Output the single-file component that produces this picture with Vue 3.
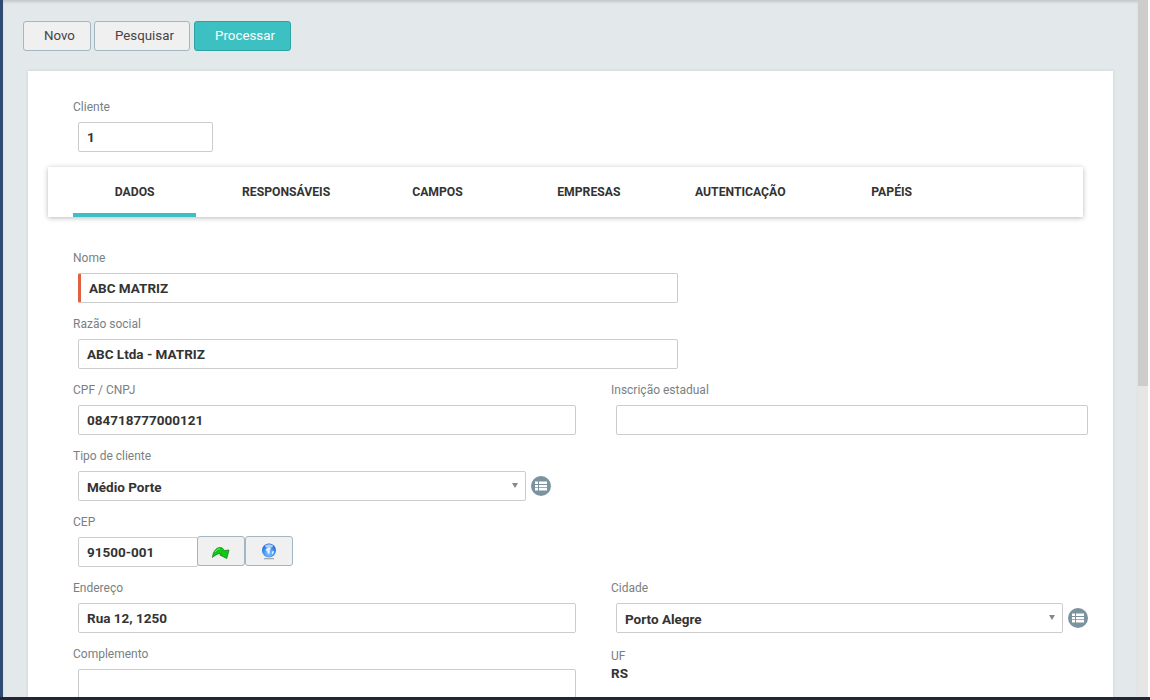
<script setup>
const tabs = ['DADOS', 'RESPONSÁVEIS', 'CAMPOS', 'EMPRESAS', 'AUTENTICAÇÃO', 'PAPÉIS']
</script>

<template>
  <div class="page">
    <div class="main">
      <!-- toolbar -->
      <div class="toolbar">
        <button class="btn btn-novo">Novo</button>
        <button class="btn btn-pesquisar">Pesquisar</button>
        <button class="btn btn-primary">Processar</button>
      </div>

      <div class="card">
        <div class="field-cliente">
          <label>Cliente</label>
          <div class="input input-cliente">1</div>
        </div>

        <!-- tabs -->
        <div class="tabs">
          <div v-for="(t, i) in tabs" :key="t" class="tab" :class="{ active: i === 0 }">{{ t }}</div>
        </div>

        <div class="form">
          <div class="row">
            <label>Nome</label>
            <div class="input input-nome required">ABC MATRIZ</div>
          </div>
          <div class="row">
            <label>Razão social</label>
            <div class="input input-nome">ABC Ltda - MATRIZ</div>
          </div>
          <div class="row two">
            <div>
              <label>CPF / CNPJ</label>
              <div class="input">084718777000121</div>
            </div>
            <div>
              <label>Inscrição estadual</label>
              <div class="input"></div>
            </div>
          </div>
          <div class="row">
            <label>Tipo de cliente</label>
            <div class="with-icon tipo">
              <div class="input select">Médio Porte<span class="caret"></span></div>
              <svg class="list-icon" viewBox="0 0 20 20">
                <circle cx="10" cy="10" r="10" fill="#7b929f" />
                <path fill="#fff" d="M4 5.5h3v2.6H4zM8 5.5h8v2.6H8zM4 8.9h3v2.4H4zM8 8.9h8v2.4H8zM4 12.1h3v2.5H4zM8 12.1h8v2.5H8z" />
              </svg>
            </div>
          </div>
          <div class="row">
            <label>CEP</label>
            <div class="cep">
              <div class="input input-cep">91500-001</div>
              <button class="btn-icon btn-arrow">
                <svg width="18" height="12" viewBox="0 0 18 12">
                  <path fill="#12c912" stroke="#0b7a14" stroke-width="0.7" d="M0.500 10.500C0.800 5 4 0.500 8 0.500 10.200 0.500 11.500 1.800 12.200 3.600L17 3 14.800 11.500 7.800 8 9.300 7C7.800 6 4 7 0.500 10.500z" />
                  <path fill="none" stroke="#7cf07c" stroke-width="1" d="M3 5C4.400 2.900 6.200 1.800 8 1.900" />
                </svg>
              </button>
              <button class="btn-icon btn-globe">
                <svg width="16" height="17" viewBox="0 0 16 17">
                  <defs>
                    <radialGradient id="globe" cx="0.5" cy="0.7" r="0.75">
                      <stop offset="0" stop-color="#8cc6ff" />
                      <stop offset="0.55" stop-color="#3d8ff2" />
                      <stop offset="1" stop-color="#1553cc" />
                    </radialGradient>
                  </defs>
                  <rect x="3" y="15" width="10" height="1.3" fill="#a8a8a8" />
                  <circle cx="8" cy="7.500" r="7" fill="url(#globe)" />
                  <ellipse cx="8" cy="3" rx="4" ry="1.800" fill="#e6f3ff" opacity="0.7" />
                  <path fill="#f2f8ff" d="M6 5l3-.5 1 1.500-1.500 1.200.5 1.800L7 11 6.200 8.500 4.500 7zM11 8.500l2-.5-.5 2.200L11 11.500z" opacity="0.9" />
                </svg>
              </button>
            </div>
          </div>
          <div class="row two">
            <div>
              <label>Endereço</label>
              <div class="input">Rua 12, 1250</div>
            </div>
            <div>
              <label>Cidade</label>
              <div class="with-icon">
                <div class="input select">Porto Alegre<span class="caret"></span></div>
                <svg class="list-icon" viewBox="0 0 20 20">
                  <circle cx="10" cy="10" r="10" fill="#7b929f" />
                  <path fill="#fff" d="M4 5.5h3v2.6H4zM8 5.5h8v2.6H8zM4 8.9h3v2.4H4zM8 8.9h8v2.4H8zM4 12.1h3v2.5H4zM8 12.1h8v2.5H8z" />
                </svg>
              </div>
            </div>
          </div>
          <div class="row two">
            <div>
              <label>Complemento</label>
              <div class="input"></div>
            </div>
            <div>
              <label class="uf-label">UF</label>
              <div class="uf">RS</div>
            </div>
          </div>
        </div>
      </div>
    </div>

    <!-- scrollbar -->
    <div class="scrollbar"><div class="thumb"></div></div>
    <div class="bottom-line"></div>
  </div>
</template>

<style>
html, body {
  margin: 0;
  background: #fff;
}
</style>

<style scoped>
.page {
  position: relative;
  display: flex;
  width: 1150px;
  height: 700px;
  overflow: hidden;
  background: #fff;
  font-family: Roboto, sans-serif;
  box-sizing: border-box;
  padding-right: 2px;
}

.main {
  flex: 1;
  min-width: 0;
  height: 100%;
  box-sizing: border-box;
  background: #e3e8eb;
  border-left: 3px solid #2f4a73;
  box-shadow: inset 0 3px 3px -1px #c4c7c9;
  padding: 21px 25px 0 20px;
  overflow: hidden;
}

.toolbar {
  display: flex;
  gap: 3px;
  height: 30px;
}

.btn {
  height: 30px;
  box-sizing: border-box;
  border: 1px solid #a3b6c2;
  border-radius: 3px;
  background: #f0f0f0;
  color: #444;
  font-family: inherit;
  font-size: 13.3px;
  padding: 0 0 2px 5px;
}

.btn-novo { width: 68px; }
.btn-pesquisar { width: 96px; }

.btn-primary {
  width: 97px;
  margin-left: 1px;
  background: #3cc0c2;
  border-color: #2fa2a5;
  color: #fff;
}

.card {
  margin: 20px 0 0 5px;
  width: 1085px;
  height: 640px;
  box-sizing: border-box;
  background: #fff;
  box-shadow: 0 0 3px rgba(0, 0, 0, 0.12);
  padding: 28px 25px 0 20px;
}

label {
  display: block;
  height: 15px;
  line-height: 17px;
  padding-left: 25px;
  font-size: 12px;
  color: #7a7f82;
}

.input {
  height: 30px;
  box-sizing: border-box;
  margin: 8px 0 0 30px;
  border: 1px solid #ccc;
  border-radius: 2px;
  padding: 0 8px;
  font-size: 13.5px;
  font-weight: 700;
  line-height: 28px;
  color: #333;
  background: #fff;
}

.input-cliente {
  width: 135px;
}

.tabs {
  display: flex;
  gap: 28px;
  height: 50px;
  margin-top: 15px;
  padding-left: 25px;
  box-sizing: border-box;
  width: 1035px;
  background: #fff;
  box-shadow: 0 1px 5px rgba(0, 0, 0, 0.28);
}

.tab {
  width: 123.4px;
  flex: none;
  box-sizing: border-box;
  text-align: center;
  line-height: 51px;
  font-size: 12.2px;
  font-weight: 700;
  color: #333;
  white-space: nowrap;
}

.tab.active {
  height: 50px;
  border-bottom: 4px solid #3cc0c2;
}

.form {
  padding-top: 33px;
}

.row {
  height: 66px;
}

.row > .input {
  width: 600px;
}

.required {
  border-left: 3px solid #e0603f;
}

.two {
  display: grid;
  grid-template-columns: 498px 472px;
  column-gap: 35px;
}

.two > div {
  min-width: 0;
}

.two > div:first-child .input {
  width: 498px;
}

.two > div:last-child {
  margin-left: 30px;
}

.two > div:last-child label {
  padding-left: 0;
}

.two > div:last-child .input {
  margin-left: 5px;
}

.two > div:last-child > .input {
  width: 472px;
}

.with-icon {
  display: flex;
  align-items: center;
  gap: 5px;
}

.select {
  line-height: 30px;
}

.tipo .select {
  width: 448px;
}

.two .with-icon .select {
  width: 447px;
}

.with-icon .select {
  position: relative;
  flex: none;
}

.caret {
  position: absolute;
  right: 7px;
  top: 11px;
  width: 0;
  height: 0;
  border-left: 3.5px solid transparent;
  border-right: 3.5px solid transparent;
  border-top: 5px solid #888;
}

.list-icon {
  width: 20px;
  height: 20px;
  flex: none;
  margin-top: 8px;
}

.cep {
  display: flex;
  align-items: flex-start;
}

.input-cep {
  width: 120px;
}

.btn-icon {
  width: 48px;
  height: 30px;
  margin-top: 7px;
  box-sizing: border-box;
  border: 1px solid #a3b6c2;
  border-radius: 3px;
  background: #f0f0f0;
  padding: 0;
  display: flex;
  align-items: center;
  justify-content: center;
}

.btn-arrow svg {
  margin-top: 3px;
}

.btn-globe svg {
  margin-top: 1px;
}

.input-cep + .btn-icon {
  margin-left: -1px;
}

.uf-label {
  margin-top: 2px;
}

.uf {
  font-size: 13.5px;
  font-weight: 700;
  line-height: 20px;
  color: #333;
}

.scrollbar {
  width: 10px;
  flex: none;
  height: 100%;
  background: #e6e6e6;
}

.thumb {
  height: 386px;
  background: #cdcdcd;
}

.bottom-line {
  position: absolute;
  left: 0;
  right: 0;
  bottom: 0;
  height: 3px;
  background: #222733;
}
</style>
